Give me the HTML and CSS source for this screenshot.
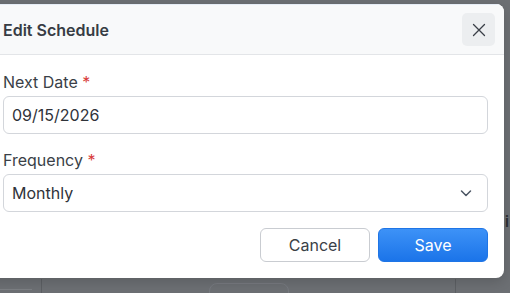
FILE: index.html
```html
<!DOCTYPE html>
<html>
<head>
<meta charset="utf-8">
<link rel="stylesheet" href="styles.css">
</head>
<body>
<div class="backdrop">
  <div class="bg-line bg-v1"></div>
  <div class="bg-line bg-v2"></div>
  <div class="bg-line bg-h1"></div>
  <div class="bg-pill"></div>
  <div class="bg-char">i</div>
</div>
<div class="modal">
  <div class="modal-header">
    <h2 class="modal-title">Edit Schedule</h2>
    <button class="close-btn" aria-label="Close">
      <svg width="14" height="14" viewBox="0 0 14 14"><path d="M1.5 1.5 L12.5 12.5 M12.5 1.5 L1.5 12.5" stroke="#3a3f47" stroke-width="1.3" fill="none" stroke-linecap="round"/></svg>
    </button>
  </div>
  <div class="modal-body">
    <div class="field">
      <label class="label">Next Date <span class="req">*</span></label>
      <div class="input">09/15/2026</div>
    </div>
    <div class="field">
      <label class="label">Frequency <span class="req">*</span></label>
      <div class="input select">
        <span>Monthly</span>
        <svg width="14" height="14" viewBox="0 0 14 14"><path d="M2.5 5 L7 9.5 L11.5 5" stroke="#4b5563" stroke-width="1.5" fill="none" stroke-linecap="round" stroke-linejoin="round"/></svg>
      </div>
    </div>
    <div class="actions">
      <button class="btn btn-cancel">Cancel</button>
      <button class="btn btn-save">Save</button>
    </div>
  </div>
</div>
</body>
</html>
```
FILE: styles.css
```css
html, body {
  margin: 0;
  padding: 0;
  width: 510px;
  height: 293px;
  overflow: hidden;
  font-family: Inter, "Liberation Sans", sans-serif;
}
body {
  background: #6c6f73;
  position: relative;
}
.backdrop {
  position: absolute;
  inset: 0;
}
.bg-line { position: absolute; background: #5c5f63; }
.bg-v1 { left: 41px; top: 279px; width: 1px; height: 14px; }
.bg-v2 { left: 455px; top: 279px; width: 1px; height: 14px; }
.bg-h1 { left: 0; top: 289px; width: 32px; height: 1px; background: #7c7f83; }
.bg-pill {
  position: absolute;
  left: 209px; top: 283px; width: 78px; height: 20px;
  border: 1px solid #777a80; border-radius: 8px;
}
.bg-char {
  position: absolute;
  left: 505px; top: 212px;
  font-size: 15px; color: #2b2d30; font-weight: 600;
}
.modal {
  position: absolute;
  left: -13px;
  top: 4px;
  width: 517px;
  background: #fff;
  border-radius: 8px;
  overflow: hidden;
  box-shadow: 0 4px 12px rgba(0,0,0,0.15);
}
.modal-header {
  display: flex;
  align-items: center;
  justify-content: space-between;
  padding: 0 9px 0 16px;
  background: #f8f9fa;
  border-top: 1px solid #e6edf6;
  border-bottom: 1px solid #e3e5e8;
  box-sizing: border-box;
  height: 51px;
}
.modal-title {
  margin: 0;
  font-size: 16px;
  font-weight: 600;
  color: #373c44;
}
.close-btn {
  width: 33px;
  height: 33px;
  border: none;
  border-radius: 5px;
  background: #eceef0;
  display: flex;
  align-items: center;
  justify-content: center;
  padding: 0;
}
.modal-body {
  padding: 17px 16px 16px;
  display: flex;
  flex-direction: column;
}
.field {
  display: flex;
  flex-direction: column;
  gap: 4px;
  margin-bottom: 16px;
}
.label {
  font-size: 16px;
  color: #3a3f47;
  line-height: 20px;
}
.req { color: #d83a3a; }
.input {
  height: 38px;
  box-sizing: border-box;
  border: 1px solid #d3d6db;
  border-radius: 6px;
  padding: 0 8px;
  display: flex;
  align-items: center;
  font-size: 16px;
  color: #2f333a;
}
.select {
  justify-content: space-between;
  padding-right: 14px;
}
.actions {
  display: flex;
  justify-content: flex-end;
  gap: 8px;
}
.btn {
  width: 110px;
  height: 34px;
  border-radius: 6px;
  font-family: Inter, "Liberation Sans", sans-serif;
  font-size: 16px;
  padding: 0;
}
.btn-cancel {
  background: #fff;
  border: 1px solid #c9ccd1;
  color: #3a3f47;
}
.btn-save {
  background: linear-gradient(#3d92f7, #1b74e9);
  border: 1px solid #1f75e6;
  color: #fff;
}
```
